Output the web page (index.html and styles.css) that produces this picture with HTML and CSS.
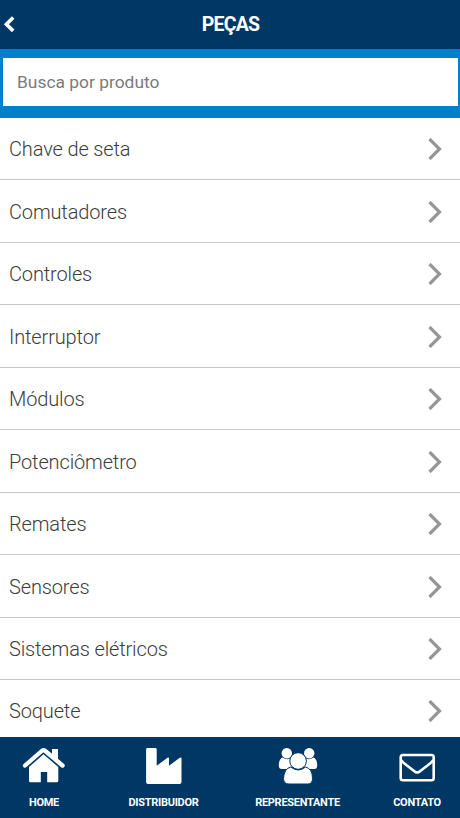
FILE: index.html
```
<!DOCTYPE html>
<html lang="pt-BR">
<head>
<meta charset="utf-8">
<title>Peças</title>
<link rel="stylesheet" href="styles.css">
</head>
<body>
<div class="app">
  <header class="header">
    <svg class="back" viewBox="0 0 12 18"><path d="M10.200 1.500 3.400 8.200l6.800 6.700" fill="none" stroke="#fff" stroke-width="3.600"/></svg>
    <h1 class="title">PEÇAS</h1>
  </header>
  <div class="search"><input class="field" type="text" placeholder="Busca por produto"></div>
  <ul class="list">
    <li class="row"><span>Chave de seta</span><svg class="chevron" viewBox="0 0 14 22"><path d="M1.5 1 11.5 11 1.5 21"/></svg></li>
    <li class="row"><span>Comutadores</span><svg class="chevron" viewBox="0 0 14 22"><path d="M1.5 1 11.5 11 1.5 21"/></svg></li>
    <li class="row"><span>Controles</span><svg class="chevron" viewBox="0 0 14 22"><path d="M1.5 1 11.5 11 1.5 21"/></svg></li>
    <li class="row"><span>Interruptor</span><svg class="chevron" viewBox="0 0 14 22"><path d="M1.5 1 11.5 11 1.5 21"/></svg></li>
    <li class="row"><span>Módulos</span><svg class="chevron" viewBox="0 0 14 22"><path d="M1.5 1 11.5 11 1.5 21"/></svg></li>
    <li class="row"><span>Potenciômetro</span><svg class="chevron" viewBox="0 0 14 22"><path d="M1.5 1 11.5 11 1.5 21"/></svg></li>
    <li class="row"><span>Remates</span><svg class="chevron" viewBox="0 0 14 22"><path d="M1.5 1 11.5 11 1.5 21"/></svg></li>
    <li class="row"><span>Sensores</span><svg class="chevron" viewBox="0 0 14 22"><path d="M1.5 1 11.5 11 1.5 21"/></svg></li>
    <li class="row"><span>Sistemas elétricos</span><svg class="chevron" viewBox="0 0 14 22"><path d="M1.5 1 11.5 11 1.5 21"/></svg></li>
    <li class="row"><span>Soquete</span><svg class="chevron" viewBox="0 0 14 22"><path d="M1.5 1 11.5 11 1.5 21"/></svg></li>
  </ul>
  <nav class="tabs">
    <a class="tab"><svg class="icon" viewBox="0 0 44 38"><path d="M3 18.500 19.700 4q1.800-1.500 3.600 0L40.500 18.500" fill="none" stroke="#fff" stroke-width="4.300" stroke-linecap="round"/><path d="M30 2h6v13l-6-5.500zM21.500 7.300 36.300 20V33.700q0 1.500-1.500 1.500H25.200V25h-6.400v10.200H8.500Q7 35.200 7 33.700V20z" fill="#fff"/></svg><span>HOME</span></a>
    <a class="tab"><svg class="icon" viewBox="0 0 44 38"><path d="M5.500 1h7.800q1.400 0 1.400 1.400v16.300l10.800-7.900q1.500-.9 1.500.8v7.100l10.800-7.900q1.700-.9 1.700.8v23.400q0 1.900-1.900 1.900H6q-1.900 0-1.900-1.900V2.400Q4.100 1 5.500 1z" fill="#fff"/></svg><span>DISTRIBUIDOR</span></a>
    <a class="tab"><svg class="icon" viewBox="0 0 44 38"><g fill="#fff"><circle cx="10.800" cy="6.300" r="5.200"/><circle cx="33.200" cy="6.300" r="5.200"/><path d="M6.300 10.500q4.500 3 7.500 1 0 5 3 8-4.500 1-6 2.500h-5q-3 0-3-3.500 0-6 3.500-8zM37.700 10.500q-4.500 3-7.500 1 0 5-3 8 4.500 1 6 2.500h5q3 0 3-3.500 0-6-3.500-8z"/></g><g fill="#fff" stroke="#003764" stroke-width="1"><path d="M14.800 20q7.400 6 14.800 0 6.900 1.700 6.900 11.500 0 5.500-5 5.500H13q-5.500 0-5.500-5.500Q8 21.700 14.800 20z"/><circle cx="22.100" cy="14" r="8.300"/></g></svg><span>REPRESENTANTE</span></a>
    <a class="tab tab-last"><svg class="icon" viewBox="0 0 44 38"><g fill="none" stroke="#fff" stroke-width="2.600"><rect x="5.700" y="8" width="33" height="25.200" rx="2.200"/><path d="M6 13q2 2.500 5 4.700l8.400 6.500q2.800 2.400 5.600 0l8.400-6.500q3-2.200 5-4.700"/></g></svg><span>CONTATO</span></a>
  </nav>
</div>
</body>
</html>
```
FILE: styles.css
```
* { box-sizing: border-box; }
body { margin: 0; background: #fff; font-family: Roboto, "Liberation Sans", sans-serif; }
.app { display: flex; flex-direction: column; width: 460px; height: 818px; overflow: hidden; }
.header { display: grid; grid-template-columns: 12px 1fr 10px; align-items: center; height: 49px; flex: none; padding: 0 4px 0 3px; background: #003764; }
.back { width: 12px; height: 18px; }
.title { margin: 0; color: #fff; font-size: 19.5px; font-weight: 700; line-height: 24px; letter-spacing: -0.8px; text-align: center; }
.search { flex: none; height: 69px; padding: 9px 2px 0 3px; background: #0080cb; }
.field { display: block; width: 100%; height: 48px; padding: 0 14px; border: 0; border-radius: 0; background: #fff; font: 400 17.4px Roboto, sans-serif; }
.field::placeholder { color: #7b7b7b; }
.list { flex: 1; min-height: 0; margin: 0; padding: 0; overflow: hidden; list-style: none; }
.row { display: flex; align-items: center; justify-content: space-between; height: 62.45px; padding: 1.5px 18px 0 9px; border-bottom: 1px solid #c6c6c6; color: #3c3c3c; font-size: 20px; font-weight: 300; letter-spacing: -0.14px; }
.chevron { width: 14px; height: 22px; fill: none; stroke: #969696; stroke-width: 3.2; }
.tabs { display: grid; grid-template-columns: 88px 151px 117px 104px; flex: none; height: 81px; background: #003764; }
.tab { display: flex; flex-direction: column; align-items: center; padding-top: 10px; color: #fff; font-size: 11px; font-weight: 700; line-height: 14px; letter-spacing: -0.28px; }
.tab-last { padding-left: 18px; }
.icon { width: 44px; height: 38px; margin-bottom: 10.5px; }
```
